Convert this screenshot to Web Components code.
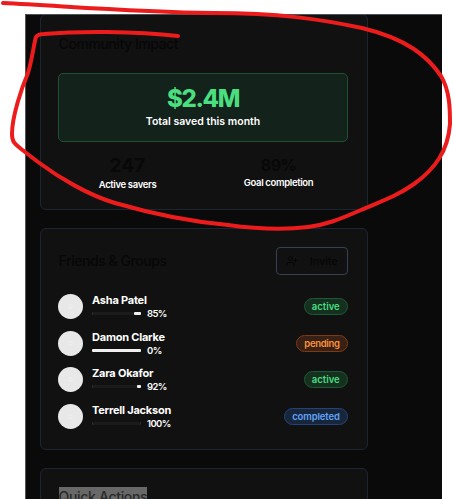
<!DOCTYPE html>
<html lang="en">
<head>
<meta charset="utf-8">
<title>Community savings</title>
<style>
    body {
        margin: 0;
        background: #fff;
        font-family: "Inter", "Liberation Sans", sans-serif;
        color: #fff;
    }
</style>
</head>
<body>
<savings-page></savings-page>

<script>
class DashCard extends HTMLElement {
    #template = `
        <style>
            :host {
                display: block;
                box-sizing: border-box;
                padding: 18px 19px 18px 17px;
                border: 1px solid #1c2633;
                border-radius: 6px;
                background: #111111;
            }
            header {
                display: flex;
                align-items: center;
                justify-content: space-between;
                height: var(--head-height, 28px);
                margin-bottom: var(--head-gap, 14px);
            }
            h2 {
                margin: 0 0 0 0.6px;
                font-size: 14px;
                line-height: 20px;
                font-weight: 500;
                letter-spacing: var(--title-spacing, -0.45px);
                color: var(--title-color, #070707);
                background: var(--title-background, none);
                white-space: nowrap;
            }
        </style>
        <header><h2></h2><slot name="action"></slot></header>
        <slot></slot>
    `;

    constructor() {
        super();
        const root = this.attachShadow({ mode: 'open' });
        root.innerHTML = this.#template;
        root.querySelector('h2').textContent = this.getAttribute('heading');
    }
}


class ImpactTotal extends HTMLElement {
    #template = `
        <style>
            :host {
                display: block;
                box-sizing: border-box;
                height: 69px;
                padding-top: 11px;
                border: 1px solid #1d5230;
                border-radius: 5px;
                background: #13221a;
                text-align: center;
            }
            .amount {
                font-size: 24px;
                line-height: 28px;
                font-weight: 800;
                letter-spacing: -1.4px;
                color: #4ade80;
            }
            .label {
                font-size: 10.5px;
                line-height: 17px;
                font-weight: 600;
            }
        </style>
        <div class="amount"><slot name="amount"></slot></div>
        <div class="label"><slot></slot></div>
    `;

    constructor() {
        super();
        this.attachShadow({ mode: 'open' }).innerHTML = this.#template;
    }
}


class ImpactStat extends HTMLElement {
    #template = `
        <style>
            :host { display: block; text-align: center; }
            .value {
                font-size: var(--value-size, 19px);
                line-height: var(--value-line, 24px);
                font-weight: 700;
                letter-spacing: var(--value-spacing, 0.2px);
                color: #080808;
            }
            .label {
                font-size: 9.5px;
                line-height: 13px;
                font-weight: 600;
                letter-spacing: -0.35px;
            }
        </style>
        <div class="value"><slot name="value"></slot></div>
        <div class="label"><slot></slot></div>
    `;

    constructor() {
        super();
        this.attachShadow({ mode: 'open' }).innerHTML = this.#template;
    }
}


class InviteButton extends HTMLElement {
    #template = `
        <style>
            :host { display: block; }
            button {
                display: flex;
                align-items: center;
                box-sizing: border-box;
                width: 72px;
                height: 28px;
                padding: 0 9px;
                gap: 12px;
                border: 1px solid #374151;
                border-radius: 4px;
                background: transparent;
                color: #060606;
                font: 500 11px/16px "Inter", sans-serif;
                letter-spacing: -0.2px;
            }
            svg { flex: none; }
        </style>
        <button>
            <svg width="12" height="12" viewBox="0 0 24 24" fill="none" stroke="currentColor" stroke-width="2" stroke-linecap="round" stroke-linejoin="round">
                <path d="M16 21v-2a4 4 0 0 0-4-4H6a4 4 0 0 0-4 4v2"/>
                <circle cx="9" cy="7" r="4"/>
                <path d="M19 8v6M22 11h-6"/>
            </svg>
            <slot></slot>
        </button>
    `;

    constructor() {
        super();
        this.attachShadow({ mode: 'open' }).innerHTML = this.#template;
    }
}


class StatusBadge extends HTMLElement {
    #template = `
        <style>
            :host {
                display: block;
                box-sizing: border-box;
                height: 17px;
                padding: 0 7.3px;
                border: 1px solid #1b5a34;
                border-radius: 9px;
                background: #15301f;
                color: #4ade80;
                font-size: 9.5px;
                line-height: 15px;
                font-weight: 600;
            }
            :host([kind="pending"]) {
                border-color: #7b3b14;
                background: #382114;
                color: #fb923c;
                letter-spacing: -0.3px;
            }
            :host([kind="completed"]) {
                border-color: #234379;
                background: #18263c;
                color: #60a5fa;
                letter-spacing: -0.13px;
            }
        </style>
        <slot></slot>
    `;

    constructor() {
        super();
        this.attachShadow({ mode: 'open' }).innerHTML = this.#template;
    }
}


class FriendRow extends HTMLElement {
    #template = `
        <style>
            :host {
                display: flex;
                align-items: center;
                height: 26px;
            }
            .avatar {
                width: 25px;
                height: 25px;
                margin-right: 9px;
                border-radius: 50%;
                background: radial-gradient(circle, #e8e8e8 1px, #f1f1f1 1.5px, #e8e8e8 2.5px);
            }
            .info { flex: 1; }
            .name {
                font-size: 11px;
                line-height: 14px;
                font-weight: 700;
                letter-spacing: -0.22px;
            }
            .progress {
                display: flex;
                align-items: center;
                gap: 6px;
                height: 13px;
                font-size: 9.5px;
                font-weight: 600;
                letter-spacing: -0.6px;
            }
            .track {
                display: flex;
                justify-content: flex-end;
                box-sizing: border-box;
                width: 49px;
                height: 3px;
                border: solid #343434;
                border-width: 0 1px;
                border-radius: 2px;
                background: #1b1b1b;
            }
            .rest { height: 3px; border-radius: 1px; background: #f0f0f0; }
        </style>
        <div class="avatar"></div>
        <div class="info">
            <div class="name"></div>
            <div class="progress">
                <div class="track"><div class="rest"></div></div>
                <span class="value"></span>
            </div>
        </div>
        <status-badge></status-badge>
    `;

    constructor() {
        super();
        const root = this.attachShadow({ mode: 'open' });
        root.innerHTML = this.#template;

        const value = Number(this.getAttribute('value'));
        const status = this.getAttribute('status');
        const rest = root.querySelector('.rest');
        const badge = root.querySelector('status-badge');

        root.querySelector('.name').textContent = this.getAttribute('name');
        root.querySelector('.value').textContent = `${value}%`;
        rest.style.width = `${100 - value}%`;
        if (value < 100) {
            rest.style.marginRight = '-1px';
        }
        if (value === 0) {
            rest.style.marginLeft = '-1px';
            rest.style.flex = '1 0 49px';
        }
        badge.setAttribute('kind', status);
        badge.textContent = status;
    }
}


class RedScribble extends HTMLElement {
    #template = `
        <style>
            :host {
                position: absolute;
                inset: 0;
                pointer-events: none;
            }
            svg { display: block; }
        </style>
        <svg width="454" height="240" fill="none" stroke="#ed1c1c" stroke-width="4" stroke-linecap="round" stroke-linejoin="round">
            <path d="M3 3C65 6 134 12 214 13C278 13 320 19 362 28C408 39 428 57 441 76C450 91 450 110 450 124C448 151 435 169 414 184C397 196 382 201 361 210C338 220 325 225 308 227C285 230 257 229 228 225C183 221 146 212 115 203C88 195 58 177 38 162L25 152C15 144 12 143 12 134C12 116 22 87 28 73C32 60 34 43 36 37Q38 34 44 34C77 31 135 31 178 36"/>
        </svg>
    `;

    constructor() {
        super();
        this.attachShadow({ mode: 'open' }).innerHTML = this.#template;
    }
}


class SavingsPage extends HTMLElement {
    #template = `
        <style>
            :host {
                display: block;
                position: relative;
                box-sizing: border-box;
                width: 454px;
                height: 499px;
                padding: 14px 12px 0 25px;
                overflow: hidden;
            }
            main {
                display: flex;
                flex-direction: column;
                gap: 18px;
                box-sizing: border-box;
                height: 485px;
                padding: 0 74px 0 14px;
                border-left: 1px solid #555;
                border-top: 1px solid #4c5358;
                background: #0a0a0a;
                overflow: hidden;
            }
            dash-card { flex: none; }
            .impact {
                height: 196px;
                margin-top: -1px;
                --head-height: 21px;
                --head-gap: 19px;
            }
            .friends { height: 222px; }
            .actions {
                height: 90px;
                --head-height: 20px;
                --title-color: #292929;
                --title-background: #686868;
                --title-spacing: -0.33px;
            }
            .stats {
                display: grid;
                grid-template-columns: 1fr 1fr;
                gap: 12px;
                margin-top: 12px;
            }
            .goal {
                --value-size: 16px;
                --value-line: 22px;
                --value-spacing: -0.6px;
            }
            .list { display: grid; gap: 10.5px; margin-top: 18.8px; }
        </style>
        <main>
            <dash-card class="impact" heading="Community Impact">
                <impact-total><span slot="amount">$2.4M</span>Total saved this month</impact-total>
                <div class="stats">
                    <impact-stat><span slot="value">247</span>Active savers</impact-stat>
                    <impact-stat class="goal"><span slot="value">89%</span>Goal completion</impact-stat>
                </div>
            </dash-card>
            <dash-card class="friends" heading="Friends &amp; Groups">
                <invite-button slot="action">Invite</invite-button>
                <div class="list">
                    <friend-row name="Asha Patel" value="85" status="active"></friend-row>
                    <friend-row name="Damon Clarke" value="0" status="pending"></friend-row>
                    <friend-row name="Zara Okafor" value="92" status="active"></friend-row>
                    <friend-row name="Terrell Jackson" value="100" status="completed"></friend-row>
                </div>
            </dash-card>
            <dash-card class="actions" heading="Quick Actions"></dash-card>
        </main>
        <red-scribble></red-scribble>
    `;

    constructor() {
        super();
        this.attachShadow({ mode: 'open' }).innerHTML = this.#template;
    }
}


window.customElements.define('dash-card', DashCard);
window.customElements.define('impact-total', ImpactTotal);
window.customElements.define('impact-stat', ImpactStat);
window.customElements.define('invite-button', InviteButton);
window.customElements.define('status-badge', StatusBadge);
window.customElements.define('friend-row', FriendRow);
window.customElements.define('red-scribble', RedScribble);
window.customElements.define('savings-page', SavingsPage);
</script>
</body>
</html>
